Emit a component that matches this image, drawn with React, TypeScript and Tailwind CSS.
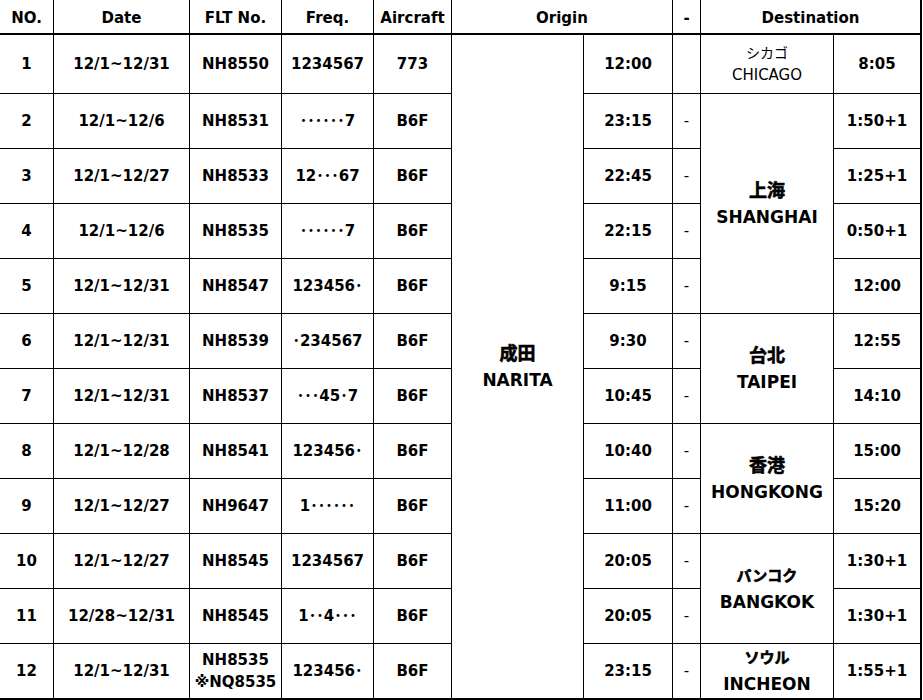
import React from "react";

type Row = {
  no: string;
  date: string;
  flt: React.ReactNode;
  freq: string;
  ac: string;
  dep: string;
  dash: boolean;
  dest?: { span: number; jp: string; en: string; jpClass: string; enClass: string };
  arr: string;
};

// CJK family has no real bold here, so thicken the strokes a little
const kanji = "text-[18px] leading-[26px] font-bold [-webkit-text-stroke:0.6px_black]";
const kana = "text-[15px] leading-[26px] font-bold [-webkit-text-stroke:0.6px_black]";
const city = "text-[17px] leading-[26px] font-bold";

const rows: Row[] = [
  { no: "1", date: "12/1~12/31", flt: "NH8550", freq: "1234567", ac: "773", dep: "12:00", dash: false, dest: { span: 1, jp: "シカゴ", en: "CHICAGO", jpClass: "text-[14px] leading-[22px] font-normal", enClass: "text-[15px] leading-[22px] font-normal" }, arr: "8:05" },
  { no: "2", date: "12/1~12/6", flt: "NH8531", freq: "･･････7", ac: "B6F", dep: "23:15", dash: true, dest: { span: 4, jp: "上海", en: "SHANGHAI", jpClass: kanji, enClass: city }, arr: "1:50+1" },
  { no: "3", date: "12/1~12/27", flt: "NH8533", freq: "12･･･67", ac: "B6F", dep: "22:45", dash: true, arr: "1:25+1" },
  { no: "4", date: "12/1~12/6", flt: "NH8535", freq: "･･････7", ac: "B6F", dep: "22:15", dash: true, arr: "0:50+1" },
  { no: "5", date: "12/1~12/31", flt: "NH8547", freq: "123456･", ac: "B6F", dep: "9:15", dash: true, arr: "12:00" },
  { no: "6", date: "12/1~12/31", flt: "NH8539", freq: "･234567", ac: "B6F", dep: "9:30", dash: true, dest: { span: 2, jp: "台北", en: "TAIPEI", jpClass: kanji, enClass: city }, arr: "12:55" },
  { no: "7", date: "12/1~12/31", flt: "NH8537", freq: "･･･45･7", ac: "B6F", dep: "10:45", dash: true, arr: "14:10" },
  { no: "8", date: "12/1~12/28", flt: "NH8541", freq: "123456･", ac: "B6F", dep: "10:40", dash: true, dest: { span: 2, jp: "香港", en: "HONGKONG", jpClass: kanji, enClass: city }, arr: "15:00" },
  { no: "9", date: "12/1~12/27", flt: "NH9647", freq: "1･･････", ac: "B6F", dep: "11:00", dash: true, arr: "15:20" },
  { no: "10", date: "12/1~12/27", flt: "NH8545", freq: "1234567", ac: "B6F", dep: "20:05", dash: true, dest: { span: 2, jp: "バンコク", en: "BANGKOK", jpClass: kana, enClass: city }, arr: "1:30+1" },
  { no: "11", date: "12/28~12/31", flt: "NH8545", freq: "1･･4･･･", ac: "B6F", dep: "20:05", dash: true, arr: "1:30+1" },
  {
    no: "12",
    date: "12/1~12/31",
    flt: (
      <div className="leading-[22px]">
        <div>NH8535</div>
        <div>※NQ8535</div>
      </div>
    ),
    freq: "123456･",
    ac: "B6F",
    dep: "23:15",
    dash: true,
    dest: { span: 1, jp: "ソウル", en: "INCHEON", jpClass: kana, enClass: city },
    arr: "1:55+1",
  },
];

const cell = "bg-white flex items-center justify-center text-center";
const head = "bg-white border-b border-black flex items-center justify-center font-bold pt-[3px]";

const spanClass: Record<number, string> = {
  1: "row-span-1",
  2: "row-span-2",
  4: "row-span-4",
};

export default function App() {
  return (
    <div className="bg-white w-[923px] h-[700px]">
      <div className="grid w-[922px] bg-black gap-px border-r-2 border-b-2 border-black grid-cols-[53px_135px_91px_91px_77px_131px_88px_27px_132px_86px] grid-rows-[34px_58px_repeat(11,54px)] font-['DejaVu_Sans','Noto_Sans_CJK_JP',sans-serif] text-[15px] font-bold text-black">
        <div className={head}>NO.</div>
        <div className={head}>Date</div>
        <div className={head}>FLT No.</div>
        <div className={head}>Freq.</div>
        <div className={head}>Aircraft</div>
        <div className={`${head} col-span-2`}>Origin</div>
        <div className={head}>-</div>
        <div className={`${head} col-span-2`}>Destination</div>

        {rows.map((r, i) => (
          <React.Fragment key={r.no}>
            <div className={cell}>{r.no}</div>
            <div className={cell}>{r.date}</div>
            <div className={cell}>{r.flt}</div>
            <div className={cell}>{r.freq}</div>
            <div className={cell}>{r.ac}</div>
            {i === 0 && (
              <div className={`${cell} row-span-12 flex-col`}>
                <div className={kanji}>成田</div>
                <div className={city}>NARITA</div>
              </div>
            )}
            <div className={cell}>{r.dep}</div>
            <div className={`${cell} font-normal`}>{r.dash ? "-" : ""}</div>
            {r.dest && (
              <div className={`${cell} ${spanClass[r.dest.span]} flex-col`}>
                <div className={r.dest.jpClass}>{r.dest.jp}</div>
                <div className={r.dest.enClass}>{r.dest.en}</div>
              </div>
            )}
            <div className={cell}>{r.arr}</div>
          </React.Fragment>
        ))}
      </div>
    </div>
  );
}
